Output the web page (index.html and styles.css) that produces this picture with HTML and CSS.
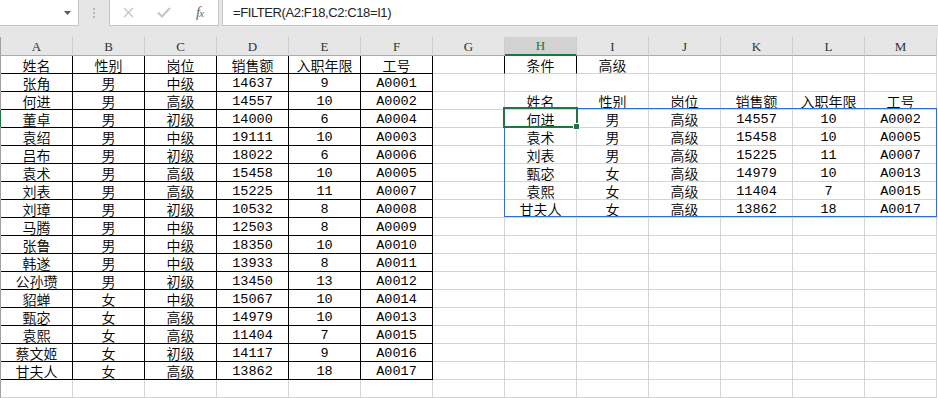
FILE: index.html
```html
<!DOCTYPE html>
<html lang="zh-CN">
<head>
  <meta charset="UTF-8" />
  <title>FILTER - 工作表</title>
  <link rel="stylesheet" href="styles.css">
</head>
<body>

  <div class="formula-bar">
    <div class="name-box">
      <svg class="caret" width="7" height="4" viewBox="0 0 7 4"><path d="M0 0h7L3.5 4z" fill="#5a5a5a"/></svg>
    </div>
    <div class="grip"><span></span><span></span><span></span></div>
    <div class="fx-tools">
      <svg width="11" height="11" viewBox="0 0 11 11"><path d="M1 1l9 9M10 1l-9 9" stroke="#c4c4c4" stroke-width="1.3"/></svg>
      <svg width="14" height="11" viewBox="0 0 14 11"><path d="M1 5.5l4 4L13 1" fill="none" stroke="#c4c4c4" stroke-width="2"/></svg>
      <span class="fx"><i>f</i><small>x</small></span>
    </div>
    <div class="formula">=FILTER(A2:F18,C2:C18=I1)</div>
  </div>
  <div class="strip"></div>

  <div class="grid">
    <table class="sheet">
      <thead>
        <tr>
          <th class="stub"></th>
          <th>A</th><th>B</th><th>C</th><th>D</th><th>E</th><th>F</th><th>G</th>
          <th class="sel">H</th><th>I</th><th>J</th><th>K</th><th>L</th><th>M</th>
        </tr>
      </thead>
      <tbody id="rows"></tbody>
    </table>
    <div class="spill"></div>
    <div class="active"></div>
    <div class="handle"></div>
  </div>

  <script>
    const left = [
      ['姓名', '性别', '岗位', '销售额', '入职年限', '工号'],
      ['张角', '男', '中级', '14637', '9', 'A0001'],
      ['何进', '男', '高级', '14557', '10', 'A0002'],
      ['董卓', '男', '初级', '14000', '6', 'A0004'],
      ['袁绍', '男', '中级', '19111', '10', 'A0003'],
      ['吕布', '男', '初级', '18022', '6', 'A0006'],
      ['袁术', '男', '高级', '15458', '10', 'A0005'],
      ['刘表', '男', '高级', '15225', '11', 'A0007'],
      ['刘璋', '男', '初级', '10532', '8', 'A0008'],
      ['马腾', '男', '中级', '12503', '8', 'A0009'],
      ['张鲁', '男', '中级', '18350', '10', 'A0010'],
      ['韩遂', '男', '中级', '13933', '8', 'A0011'],
      ['公孙瓒', '男', '初级', '13450', '13', 'A0012'],
      ['貂蝉', '女', '中级', '15067', '10', 'A0014'],
      ['甄宓', '女', '高级', '14979', '10', 'A0013'],
      ['袁熙', '女', '高级', '11404', '7', 'A0015'],
      ['蔡文姬', '女', '初级', '14117', '9', 'A0016'],
      ['甘夫人', '女', '高级', '13862', '18', 'A0017']
    ];

    // H:M block, keyed by row index (0 = row 1)
    const right = {
      0: ['条件', '高级', '', '', '', ''],
      2: ['姓名', '性别', '岗位', '销售额', '入职年限', '工号'],
      3: ['何进', '男', '高级', '14557', '10', 'A0002'],
      4: ['袁术', '男', '高级', '15458', '10', 'A0005'],
      5: ['刘表', '男', '高级', '15225', '11', 'A0007'],
      6: ['甄宓', '女', '高级', '14979', '10', 'A0013'],
      7: ['袁熙', '女', '高级', '11404', '7', 'A0015'],
      8: ['甘夫人', '女', '高级', '13862', '18', 'A0017']
    };

    const isAscii = v => /^[\x20-\x7e]+$/.test(v);

    function cell(value, classes) {
      const list = classes.slice();
      if (value && isAscii(value)) list.push('num');
      return `<td${list.length ? ` class="${list.join(' ')}"` : ''}>${value}</td>`;
    }

    const tbody = document.getElementById('rows');

    for (let r = 0; r < 20; r++) {
      const inTable = r < left.length;
      let html = `<td class="stub${r === 3 ? ' cur' : ''}"></td>`;

      for (let c = 0; c < 6; c++) {
        html += cell(inTable ? left[r][c] : '', inTable ? ['ruled'] : []);
      }
      html += cell('', r === 0 ? ['edge'] : []);

      const cells = right[r] || ['', '', '', '', '', ''];
      cells.forEach((v, i) => {
        html += cell(v, r === 0 && i === 0 ? ['edge'] : []);
      });

      const row = document.createElement('tr');
      row.innerHTML = html;
      tbody.appendChild(row);
    }
  </script>

</body>
</html>
```

FILE: styles.css
```css
:root {
  --chrome: #e6e6e6;
  --box-line: #c6c6c6;
  --grid: #d4d4d4;
  --excel-green: #217346;
  --spill: #2e6fd6;
}
body {
  margin: 0;
  width: 938px;
  height: 398px;
  overflow: hidden;
  background: #fff;
  font-family: 'Liberation Sans', 'Noto Sans CJK SC', sans-serif;
  color: #000;
}

/* formula bar */
.formula-bar {
  display: flex;
  height: 26px;
  background: var(--chrome);
}
.name-box {
  width: 79px;
  box-sizing: border-box;
  background: #fff;
  border-right: 1px solid var(--box-line);
  border-bottom: 1px solid var(--box-line);
  display: flex;
  align-items: center;
  justify-content: flex-end;
  padding-right: 7px;
}
.grip {
  width: 30px;
  display: flex;
  flex-direction: column;
  align-items: center;
  justify-content: center;
  gap: 2px;
}
.grip span {
  width: 2px;
  height: 2px;
  background: #b4b4b4;
}
.fx-tools {
  width: 110px;
  box-sizing: border-box;
  background: #fff;
  border: 1px solid var(--box-line);
  border-top: 0;
  display: flex;
  align-items: center;
  gap: 23px;
  padding-left: 13px;
}
.fx {
  font-family: 'Liberation Serif', serif;
  color: #666;
  font-size: 15px;
  line-height: 1;
  margin-left: 2px;
}
.fx small {
  font-size: 11px;
  font-style: italic;
  margin-left: -1px;
}
.formula {
  flex: 1;
  margin-left: 3px;
  background: #fff;
  border-left: 1px solid var(--box-line);
  border-bottom: 1px solid var(--box-line);
  padding-left: 10px;
  font-size: 13px;
  letter-spacing: -0.4px;
  line-height: 25px;
  color: #222;
}
.strip {
  height: 11px;
  background: var(--chrome);
}

/* sheet */
.grid {
  position: relative;
}
.sheet {
  border-collapse: separate;
  border-spacing: 0;
  table-layout: fixed;
  width: 937px;
}
.sheet tr {
  height: 18px;
}
.sheet th,
.sheet td {
  box-sizing: border-box;
  width: 72px;
  height: 18px;
  padding: 0;
  border-right: 1px solid var(--grid);
  border-bottom: 1px solid var(--grid);
  text-align: center;
  vertical-align: bottom;
  white-space: nowrap;
  font-size: 14px;
  line-height: 14px;
  font-weight: 350;
}
.sheet td.num {
  font-family: 'Liberation Mono', monospace;
  font-size: 13.5px;
  font-weight: normal;
}
.sheet th {
  background: var(--chrome);
  border-right-color: #cdcdcd;
  border-bottom-color: #ababab;
  vertical-align: middle;
  font-family: 'Liberation Serif', serif;
  font-size: 13px;
  line-height: 17px;
  font-weight: normal;
  color: #333;
}
.sheet th.sel {
  background: #d2d2d2;
  color: var(--excel-green);
  border-bottom: 2px solid var(--excel-green);
}
.sheet .stub {
  width: 1px;
  border-right-color: #a0a0a0;
}
.sheet .stub.cur {
  border-right-color: var(--excel-green);
}
.sheet td.ruled {
  border-right-color: #000;
  border-bottom-color: #000;
}
.sheet td.edge {
  border-right-color: #000;
}

/* selection overlays */
.spill {
  position: absolute;
  left: 504px;
  top: 71px;
  width: 433px;
  height: 109px;
  box-sizing: border-box;
  border: 1px solid var(--spill);
}
.active {
  position: absolute;
  left: 503px;
  top: 70px;
  width: 75px;
  height: 21px;
  box-sizing: border-box;
  border: 2px solid var(--excel-green);
}
.handle {
  position: absolute;
  left: 573px;
  top: 86px;
  width: 5px;
  height: 5px;
  background: var(--excel-green);
  border: 1px solid #fff;
}
```
